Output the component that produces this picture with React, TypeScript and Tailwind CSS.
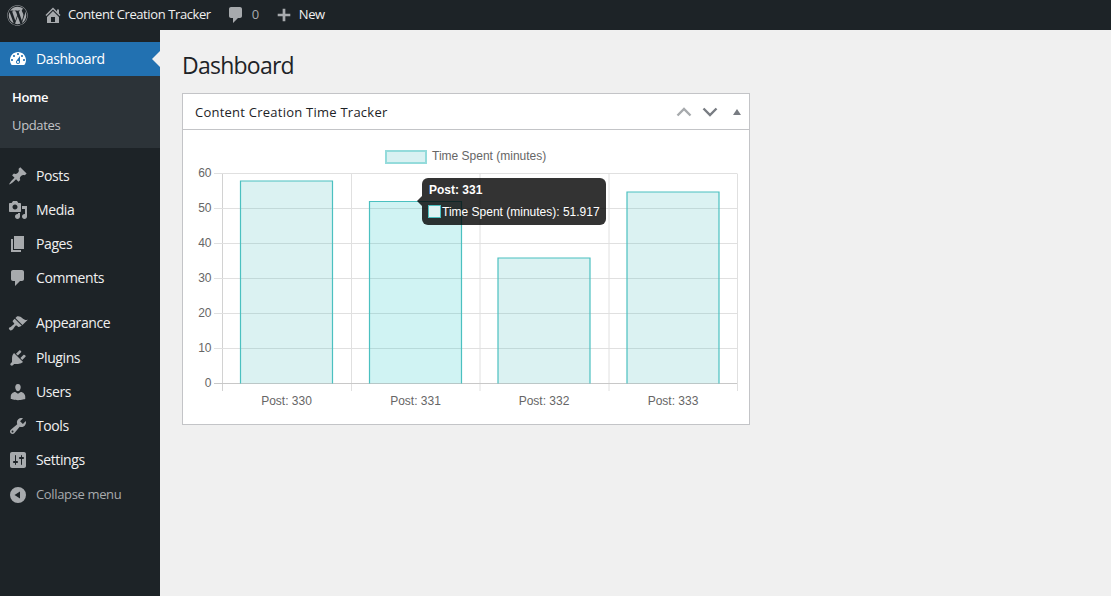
import { FaWordpress } from "react-icons/fa";

const uiFont = "font-['Open_Sans',sans-serif]";

const icons: Record<string, string> = {
  dashboard:
    "M3.76 16h12.48c1.1-1.37 1.76-3.11 1.76-5 0-4.42-3.58-8-8-8s-8 3.58-8 8c0 1.89.66 3.63 1.76 5zM10 4c.55 0 1 .45 1 1s-.45 1-1 1-1-.45-1-1 .45-1 1-1zM6 6c.55 0 1 .45 1 1s-.45 1-1 1-1-.45-1-1 .45-1 1-1zm8 0c.55 0 1 .45 1 1s-.45 1-1 1-1-.45-1-1 .45-1 1-1zm-5.37 5.55L12 7v6c0 1.1-.9 2-2 2s-2-.9-2-2c0-.57.24-1.08.63-1.45zM4 10c.55 0 1 .45 1 1s-.45 1-1 1-1-.45-1-1 .45-1 1-1zm12 0c.55 0 1 .45 1 1s-.45 1-1 1-1-.45-1-1 .45-1 1-1zm-5 3c0-.55-.45-1-1-1s-1 .45-1 1 .45 1 1 1 1-.45 1-1z",
  home: "M16 8.5l1.53 1.53-1.06 1.06L10 4.62l-6.47 6.47-1.06-1.06L10 2.5l4 4v-2h2v4zm-6-2.46l6 5.99V18H4v-5.97zM12 17v-5H8v5h4z",
  comment: "M5 2h9c1.1 0 2 .9 2 2v7c0 1.1-.9 2-2 2h-2l-5 5v-5H5c-1.1 0-2-.9-2-2V4c0-1.1.9-2 2-2z",
  plus: "M17 8.5v3h-5.5V17h-3v-5.5H3v-3h5.5V3h3v5.5z",
  posts:
    "M10.44 3.02l1.82-1.82 6.36 6.35-1.83 1.82c-1.05-.68-2.48-.57-3.41.36l-.75.75c-.92.93-1.04 2.35-.35 3.41l-1.83 1.82-2.41-2.41-2.8 2.79c-.42.42-3.38 2.71-3.8 2.29s1.86-3.39 2.28-3.81l2.79-2.79L4.1 9.36l1.83-1.82c1.05.69 2.48.57 3.4-.36l.75-.75c.93-.92 1.05-2.35.36-3.41z",
  media:
    "M13 11V4c0-.55-.45-1-1-1h-1.67L9 1H5L3.67 3H2c-.55 0-1 .45-1 1v7c0 .55.45 1 1 1h10c.55 0 1-.45 1-1zM7 4.5c1.38 0 2.5 1.12 2.5 2.5S8.38 9.5 7 9.5 4.5 8.38 4.5 7 5.62 4.5 7 4.5zM14 6h5v10.5c0 1.38-1.12 2.5-2.5 2.5S14 17.88 14 16.5s1.12-2.5 2.5-2.5c.17 0 .34.02.5.05V9h-3V6zm-4 8.05V13h2v3.5c0 1.38-1.12 2.5-2.5 2.5S7 17.88 7 16.5 8.12 14 9.5 14c.17 0 .34.02.5.05z",
  pages: "M6 15V2h10v13H6zm-1 1h8v2H3V5h2v11z",
  appearance:
    "M14.48 11.06L7.41 3.99l1.5-1.5c.5-.56 2.3-.47 3.51.32 1.21.8 1.43 1.28 2.91 2.1 1.18.64 2.45 1.26 4.45.85zm-.71.71L6.7 4.7 4.93 6.47c-.39.39-.39 1.02 0 1.41l1.06 1.06c.39.39.39 1.03 0 1.42-.6.6-1.43 1.11-2.21 1.69-.35.26-.7.53-1.01.84C1.43 13.23.4 14.08 1 15c.17.27.61.63.61.63s.41.38.63.52c.76.61 1.93-.07 2.62-.93.35-.45.68-.86.97-1.3.59-.76 1.09-1.58 1.71-2.21.39-.39 1.03-.39 1.42 0l1.06 1.06c.39.39 1.02.39 1.41 0z",
  plugins:
    "M13.11 4.36L9.87 7.6 8 5.73l3.24-3.24c.35-.34 1.05-.2 1.56.32.52.51.66 1.21.31 1.55zm-8 1.77l.91-1.12 9.01 9.01-1.19.84c-.71.71-2.63 1.16-3.82 1.16H6.14L4.9 17.26c-.59.59-1.54.59-2.12 0-.59-.58-.59-1.53 0-2.12l1.24-1.24v-3.88c0-1.13.4-3.19 1.09-3.89zm7.26 3.97l3.24-3.24c.34-.35 1.04-.21 1.55.31.52.51.66 1.21.31 1.55l-3.24 3.25z",
  users:
    "M10 9.25c-2.27 0-2.73-3.44-2.73-3.44C7 4.02 7.82 2 9.97 2c2.16 0 2.98 2.02 2.71 3.81 0 0-.41 3.44-2.68 3.44zm0 2.57L12.72 10c2.39 0 4.52 2.33 4.52 4.53v2.49s-3.65 1.13-7.24 1.13c-3.65 0-7.24-1.13-7.24-1.13v-2.49c0-2.25 1.94-4.48 4.47-4.48z",
  tools:
    "M16.68 9.77c-1.34 1.34-3.3 1.67-4.95.99l-5.41 6.52c-.99.99-2.59.99-3.58 0s-.99-2.59 0-3.57l6.52-5.42c-.68-1.65-.35-3.61.99-4.95 1.28-1.28 3.12-1.62 4.72-1.06l-2.89 2.89 2.82 2.82 2.86-2.87c.53 1.58.18 3.39-1.08 4.65zM3.81 16.21c.4.39 1.04.39 1.43 0 .4-.4.4-1.04 0-1.43-.39-.4-1.03-.4-1.43 0-.39.39-.39 1.03 0 1.43z",
  settings:
    "M18 16V4c0-1.1-.9-2-2-2H4c-1.1 0-2 .9-2 2v12c0 1.1.9 2 2 2h12c1.1 0 2-.9 2-2zM8 11h1c.55 0 1 .45 1 1s-.45 1-1 1H8v1.5c0 .28-.22.5-.5.5s-.5-.22-.5-.5V13H6c-.55 0-1-.45-1-1s.45-1 1-1h1V5.5c0-.28.22-.5.5-.5s.5.22.5.5V11zm5-2h-1c-.55 0-1-.45-1-1s.45-1 1-1h1V5.5c0-.28.22-.5.5-.5s.5.22.5.5V7h1c.55 0 1 .45 1 1s-.45 1-1 1h-1v5.5c0 .28-.22.5-.5.5s-.5-.22-.5-.5V9z",
  collapse: "M10 2a8 8 0 1 0 0 16 8 8 0 0 0 0-16zm2 4.5v7L6.5 10z",
};

function Icon({ name, className }: { name: string; className?: string }) {
  return (
    <svg viewBox="0 0 20 20" className={className} fill="currentColor">
      <path d={icons[name]} fillRule="evenodd" />
    </svg>
  );
}

function AdminBar() {
  return (
    <header className="flex h-[30px] items-center bg-[#1d2327] text-[13px] tracking-[-0.4px] text-[#f0f0f0]">
      <FaWordpress className="ml-[7px] h-[21px] w-[21px] text-[#a7aaad]" />
      <Icon name="home" className="ml-[15px] h-5 w-5 text-[#a7aaad]" />
      <span className="ml-[5px]">Content Creation Tracker</span>
      <Icon name="comment" className="ml-[15px] h-5 w-5 text-[#a7aaad]" />
      <span className="ml-[6px] text-[#a7aaad]">0</span>
      <Icon name="plus" className="ml-[16px] h-[18px] w-[18px] text-[#a7aaad]" />
      <span className="ml-[6px]">New</span>
    </header>
  );
}

const firstGroup = [
  ["posts", "Posts"],
  ["media", "Media"],
  ["pages", "Pages"],
  ["comment", "Comments"],
];
const secondGroup = [
  ["appearance", "Appearance"],
  ["plugins", "Plugins"],
  ["users", "Users"],
  ["tools", "Tools"],
  ["settings", "Settings"],
];

function MenuItem({ icon, label }: { icon: string; label: string }) {
  return (
    <div className="flex h-[34px] items-center gap-[8px] pl-[8px] text-[14px] tracking-[-0.4px] text-[#f0f0f0]">
      <Icon name={icon} className="h-5 w-5 text-[#a7aaad]" />
      <span className="pb-[2px]">{label}</span>
    </div>
  );
}

function Sidebar() {
  return (
    <aside className="w-[160px] shrink-0 bg-[#1d2327] pt-[12px]">
      <div className="relative flex h-[34px] items-center gap-[8px] bg-[#2271b1] pl-[8px] text-[14px] tracking-[-0.4px] text-white">
        <Icon name="dashboard" className="h-5 w-5" />
        <span className="pb-[2px]">Dashboard</span>
        <div className="absolute right-0 top-[9px] h-0 w-0 border-y-[8px] border-r-[8px] border-y-transparent border-r-[#f0f0f0]" />
      </div>
      <div className="flex h-[72px] flex-col bg-[#2c3338] pl-[12px] pt-[8px] text-[13px] tracking-[-0.35px]">
        <div className="flex h-[28px] items-center font-semibold text-white">Home</div>
        <div className="flex h-[28px] items-center text-[#c3c4c7]">Updates</div>
      </div>
      <div className="mt-[11px]">
        {firstGroup.map(([icon, label]) => (
          <MenuItem key={label} icon={icon} label={label} />
        ))}
      </div>
      <div className="mt-[11px] [&>*:first-child]:h-[35px]">
        {secondGroup.map(([icon, label]) => (
          <MenuItem key={label} icon={icon} label={label} />
        ))}
      </div>
      <div className="flex h-[34px] items-center gap-[8px] pl-[8px] pt-[1px] text-[13px] tracking-[-0.35px] text-[#a7aaad]">
        <Icon name="collapse" className="h-5 w-5" />
        <span>Collapse menu</span>
      </div>
    </aside>
  );
}

const bars = [
  { label: "Post: 330", left: 240.5, top: 181, fill: "#4bc0c0" },
  { label: "Post: 331", left: 369.5, top: 201.5, fill: "#14c3c3" },
  { label: "Post: 332", left: 498, top: 258, fill: "#4bc0c0" },
  { label: "Post: 333", left: 627, top: 192, fill: "#4bc0c0" },
];
const vLines = [222.5, 351.5, 480, 609, 737.5];
const ticks = [60, 50, 40, 30, 20, 10, 0];

function Chart() {
  return (
    <div className="relative h-[294px]">
      <svg viewBox="183 130 566 294" className="block h-[294px] w-[566px] font-['Liberation_Sans',sans-serif] text-[12px]">
        <rect x="386" y="151" width="40" height="12" fill="#d9f1f2" stroke="#94dbdb" strokeWidth="2" />
        <text x="432" y="160" fill="#666">Time Spent (minutes)</text>

        {vLines.map((x) => (
          <line key={x} x1={x} x2={x} y1="173.5" y2="391" stroke={x === 222.5 ? "#d2d2d2" : "#e0e0e0"} />
        ))}
        {ticks.map((t, i) => {
          const y = 173.5 + i * 35;
          return (
            <g key={t}>
              <line x1="214" x2="737" y1={y} y2={y} stroke={t === 0 ? "#c8c8c8" : "#e0e0e0"} />
              <text x="211.5" y={y + 3} textAnchor="end" fill="#666">{t}</text>
            </g>
          );
        })}

        {bars.map((b) => (
          <g key={b.label}>
            <rect x={b.left} y={b.top} width="92" height={383.5 - b.top} fill={b.fill} fillOpacity="0.2" />
            <path d={`M${b.left} 383.5V${b.top}H${b.left + 92}V383.5`} fill="none" stroke="#4bc0c0" strokeWidth="1.2" />
            <text x={b.left + 46} y="405" textAnchor="middle" fill="#666">{b.label}</text>
          </g>
        ))}
      </svg>

      <div className="absolute left-[239px] top-[48px] h-[47px] w-[184px] rounded-[6px] bg-[rgba(0,0,0,0.8)] font-['Liberation_Sans',sans-serif] text-[12px] leading-none text-white">
        <div className="absolute -left-[5px] top-[18px] h-0 w-0 border-y-[5px] border-r-[5px] border-y-transparent border-r-[rgba(0,0,0,0.8)]" />
        <div className="pl-[7px] pt-[6px] font-bold">Post: 331</div>
        <div className="flex items-center pl-[6px] pt-[9px]">
          <div className="h-[13px] w-[13px] border border-[#4bc0c0] bg-[#dff3f3]" />
          <span className="ml-[1px]">Time Spent (minutes): 51.917</span>
        </div>
      </div>
    </div>
  );
}

function Card() {
  return (
    <section className="w-[568px] border border-[#c3c4c7] bg-white">
      <div className="flex h-[36px] items-center justify-between border-b border-[#c3c4c7] pl-[12px] pr-[8px]">
        <h2 className="pt-[2px] text-[13px] font-medium tracking-[0.24px] text-[#1d2327]">Content Creation Time Tracker</h2>
        <div className="flex items-center">
          <svg viewBox="0 0 16 10" className="h-[10px] w-[16px] text-[#a7aaad]" fill="none" stroke="currentColor" strokeWidth="2.4">
            <path d="M1.5 8.5 8 2l6.5 6.5" />
          </svg>
          <svg viewBox="0 0 16 10" className="ml-[10px] h-[10px] w-[16px] text-[#787c82]" fill="none" stroke="currentColor" strokeWidth="2.4">
            <path d="M1.5 1.5 8 8l6.5-6.5" />
          </svg>
          <div className="ml-[15px] h-0 w-0 border-x-[4px] border-b-[6px] border-x-transparent border-b-[#787c82]" />
        </div>
      </div>
      <Chart />
    </section>
  );
}

export default function App() {
  return (
    <div className={`flex h-[596px] w-[1111px] flex-col overflow-hidden bg-[#f0f0f0] ${uiFont}`}>
      <AdminBar />
      <div className="flex min-h-0 flex-1">
        <Sidebar />
        <main className="flex-1 pl-[22px]">
          <h1 className="pb-[13px] pt-[21px] text-[23px] leading-[29px] tracking-[-0.75px] text-[#1d2327]">Dashboard</h1>
          <Card />
        </main>
      </div>
    </div>
  );
}
